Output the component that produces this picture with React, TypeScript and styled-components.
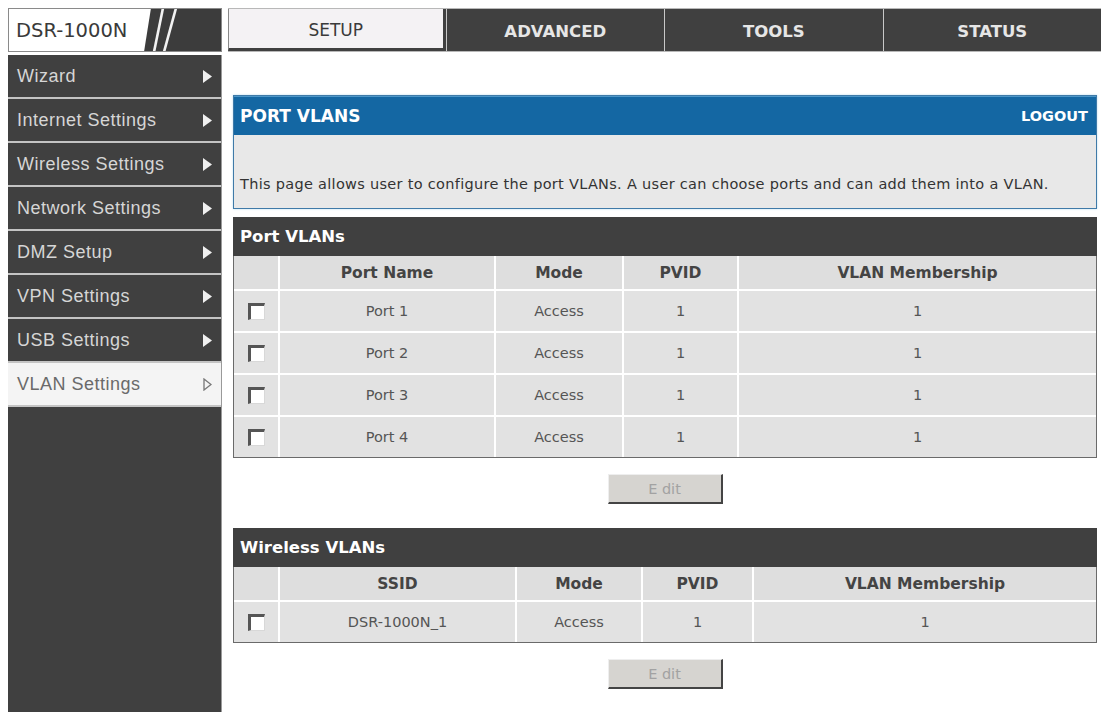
import React from 'react';
import styled, { createGlobalStyle } from 'styled-components';

const GlobalStyle = createGlobalStyle`
  html, body {
    margin: 0;
    padding: 0;
    background: #fff;
  }
  body {
    font-family: "DejaVu Sans", Verdana, sans-serif;
  }
`;

const Page = styled.div`
  display: grid;
  grid-template-columns: 214px 1fr;
  grid-template-rows: 44px 1fr;
  row-gap: 3px;
  column-gap: 6px;
  padding: 8px 3px 0 8px;
  width: 1104px;
  height: 712px;
  box-sizing: border-box;
  overflow: hidden;
`;

// Header
const LogoBox = styled.div`
  display: flex;
  align-items: center;
  justify-content: space-between;
  box-sizing: border-box;
  border: 1px solid #8a8a8a;
  background: #fff;
  padding-left: 7px;
  overflow: hidden;
`;

const LogoText = styled.span`
  font-family: "DejaVu Sans", Tahoma, sans-serif;
  font-size: 19.5px;
  color: #3a3a3a;
`;

const TabBar = styled.div`
  display: grid;
  grid-template-columns: repeat(4, 1fr);
  gap: 1px;
  background: #c8c8c8;
  border-top: 1px solid #b8b8b8;
  border-bottom: 1px solid #b8b8b8;
`;

const Tab = styled.div<{ $active?: boolean }>`
  display: flex;
  align-items: center;
  justify-content: center;
  box-sizing: border-box;
  padding-top: 3px;
  background: ${(p) => (p.$active ? '#f4f2f4' : '#404040')};
  color: ${(p) => (p.$active ? '#3a3a3a' : '#e6e6e6')};
  font-size: ${(p) => (p.$active ? '17px' : '16.5px')};
  font-weight: ${(p) => (p.$active ? 'normal' : 'bold')};
  border-left: ${(p) => (p.$active ? '1px solid #888' : 'none')};
  border-right: ${(p) => (p.$active ? '3px solid #404040' : 'none')};
  border-bottom: ${(p) => (p.$active ? '3px solid #404040' : 'none')};
`;

// Sidebar
const Sidebar = styled.nav`
  display: flex;
  flex-direction: column;
  gap: 2px;
  background: #c4c4c4;
  border-right: 1px solid #9a9a9a;
`;

const NavItem = styled.div<{ $active?: boolean }>`
  display: flex;
  align-items: center;
  justify-content: space-between;
  height: 42px;
  flex-shrink: 0;
  padding: 0 9px 0 9px;
  background: ${(p) => (p.$active ? '#f4f4f4' : '#404040')};
  color: ${(p) => (p.$active ? '#6a6a6a' : '#d6d6d6')};
  font-family: "Liberation Sans", Arial, sans-serif;
  font-size: 18px;
  letter-spacing: 0.5px;
`;

const NavFill = styled.div`
  flex: 1;
  background: #404040;
`;

// Content
const Content = styled.main`
  padding: 40px 4px 0 5px;
  display: flex;
  flex-direction: column;
`;

const InfoPanel = styled.section`
  border: 1px solid #3f7aa8;
  box-shadow: 0 0 2px #b8dcef;
`;

const InfoHead = styled.div`
  display: flex;
  align-items: center;
  justify-content: space-between;
  height: 38px;
  padding: 0 8px 0 6px;
  background: #1467a3;
  border-top: 1px solid #4e97c8;
  color: #fff;
  font-weight: bold;
  font-size: 17px;
`;

const Logout = styled.span`
  font-size: 14.5px;
`;

const InfoBody = styled.div`
  height: 73px;
  box-sizing: border-box;
  display: flex;
  align-items: flex-end;
  padding: 0 0 16px 6px;
  background: #e8e8e8;
  color: #333;
  font-size: 14.5px;
  letter-spacing: 0.3px;
`;

const Section = styled.section<{ $top: number }>`
  margin-top: ${(p) => p.$top}px;
`;

const SectionHead = styled.div`
  display: flex;
  align-items: center;
  height: 39px;
  padding-left: 7px;
  background: #404040;
  color: #fff;
  font-weight: bold;
  font-size: 16.5px;
`;

const Grid = styled.div<{ $cols: string }>`
  display: grid;
  grid-template-columns: ${(p) => p.$cols};
  gap: 2px;
  background: #fff;
  border: 1px solid #6a6a6a;
  border-top: none;
`;

const HeadCell = styled.div`
  display: flex;
  align-items: center;
  justify-content: center;
  height: 33px;
  background: #dedede;
  color: #444;
  font-weight: bold;
  font-size: 15.5px;
`;

const Cell = styled.div`
  display: flex;
  align-items: center;
  justify-content: center;
  height: 40px;
  background: #e2e2e2;
  color: #555;
  font-size: 14.5px;
`;

const Check = styled.span`
  display: block;
  width: 17px;
  height: 17px;
  box-sizing: border-box;
  background: #fff;
  border-top: 3px solid #555;
  border-left: 3px solid #555;
  border-right: 1px solid #d8d8d8;
  border-bottom: 1px solid #d8d8d8;
`;

const ButtonRow = styled.div`
  display: flex;
  justify-content: center;
  margin-top: 16px;
`;

const EditButton = styled.button`
  width: 115px;
  height: 30px;
  padding: 0;
  background: #d6d4d0;
  border: none;
  border-top: 1px solid #eeeeee;
  border-left: 1px solid #eeeeee;
  border-right: 2px solid #444;
  border-bottom: 2px solid #444;
  color: #a2a2a2;
  font-family: "DejaVu Sans", Verdana, sans-serif;
  font-size: 14.5px;
`;

const Arrow: React.FC<{ active?: boolean }> = ({ active }) => (
  <svg width="9" height="13" viewBox="0 0 9 13">
    {active ? (
      <path d="M1 1 L8 6.5 L1 12 Z" fill="none" stroke="#777" strokeWidth="1.3" />
    ) : (
      <path d="M0 0 L9 6.5 L0 13 Z" fill="#f0f0f0" />
    )}
  </svg>
);

const LogoMark: React.FC = () => (
  <svg width="80" height="44" viewBox="0 0 80 44">
    <polygon points="3,44 10,0 80,0 80,44" fill="#3c3c3c" />
    <line x1="13" y1="44" x2="22" y2="0" stroke="#f2f2f2" strokeWidth="2.6" />
    <line x1="23" y1="44" x2="35" y2="0" stroke="#f2f2f2" strokeWidth="2.6" />
  </svg>
);

const navItems = [
  'Wizard',
  'Internet Settings',
  'Wireless Settings',
  'Network Settings',
  'DMZ Setup',
  'VPN Settings',
  'USB Settings',
  'VLAN Settings'
];

const ports = ['Port 1', 'Port 2', 'Port 3', 'Port 4'];

const App: React.FC = () => {
  return (
    <>
      <GlobalStyle />
      <Page>
        <LogoBox>
          <LogoText>DSR-1000N</LogoText>
          <LogoMark />
        </LogoBox>
        <TabBar>
          <Tab $active>SETUP</Tab>
          <Tab>ADVANCED</Tab>
          <Tab>TOOLS</Tab>
          <Tab>STATUS</Tab>
        </TabBar>

        <Sidebar>
          {navItems.map((name) => {
            const active = name === 'VLAN Settings';
            return (
              <NavItem key={name} $active={active}>
                <span>{name}</span>
                <Arrow active={active} />
              </NavItem>
            );
          })}
          <NavFill />
        </Sidebar>

        <Content>
          <InfoPanel>
            <InfoHead>
              <span>PORT VLANS</span>
              <Logout>LOGOUT</Logout>
            </InfoHead>
            <InfoBody>
              This page allows user to configure the port VLANs. A user can choose ports and can add them into a VLAN.
            </InfoBody>
          </InfoPanel>

          <Section $top={8}>
            <SectionHead>Port VLANs</SectionHead>
            <Grid $cols="44px 214px 126px 113px 1fr">
              <HeadCell />
              <HeadCell>Port Name</HeadCell>
              <HeadCell>Mode</HeadCell>
              <HeadCell>PVID</HeadCell>
              <HeadCell>VLAN Membership</HeadCell>
              {ports.map((port) => (
                <React.Fragment key={port}>
                  <Cell>
                    <Check />
                  </Cell>
                  <Cell>{port}</Cell>
                  <Cell>Access</Cell>
                  <Cell>1</Cell>
                  <Cell>1</Cell>
                </React.Fragment>
              ))}
            </Grid>
          </Section>
          <ButtonRow>
            <EditButton>E dit</EditButton>
          </ButtonRow>

          <Section $top={24}>
            <SectionHead>Wireless VLANs</SectionHead>
            <Grid $cols="44px 235px 124px 109px 1fr">
              <HeadCell />
              <HeadCell>SSID</HeadCell>
              <HeadCell>Mode</HeadCell>
              <HeadCell>PVID</HeadCell>
              <HeadCell>VLAN Membership</HeadCell>
              <Cell>
                <Check />
              </Cell>
              <Cell>DSR-1000N_1</Cell>
              <Cell>Access</Cell>
              <Cell>1</Cell>
              <Cell>1</Cell>
            </Grid>
          </Section>
          <ButtonRow>
            <EditButton>E dit</EditButton>
          </ButtonRow>
        </Content>
      </Page>
    </>
  );
};

export default App;
